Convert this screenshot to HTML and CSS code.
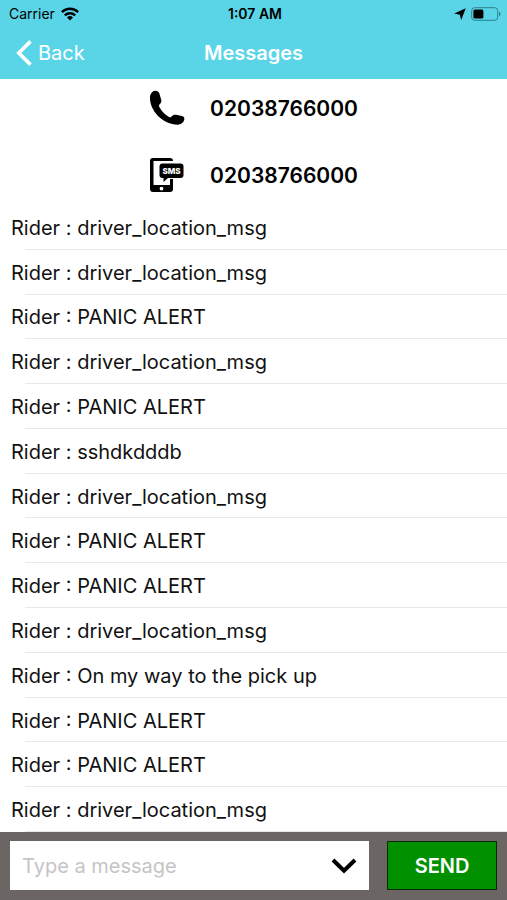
FILE: index.html
```html
<!DOCTYPE html>
<html lang="en">
<head>
<meta charset="utf-8">
<meta name="viewport" content="width=device-width, initial-scale=1">
<title>Messages</title>
<link rel="stylesheet" href="styles.css">
</head>
<body>
<header class="top">
  <div class="status">
    <div class="carrier">
      <span>Carrier</span>
      <svg width="18" height="14" viewBox="0 0 18 14" fill="none" stroke="#000" stroke-width="2.4" aria-hidden="true">
        <path d="M.9 5.1a11.6 11.6 0 0 1 16.2 0"/>
        <path d="M3.8 8.4a7.4 7.4 0 0 1 10.4 0"/>
        <path d="M9 13.4 6 10.5a4.3 4.3 0 0 1 6 0z" fill="#000" stroke="none"/>
      </svg>
    </div>
    <time>1:07 AM</time>
    <div class="power">
      <svg width="12" height="12" viewBox="0 0 12 12" aria-hidden="true"><path d="M11.8.2 7.200 12 5.800 6.800.2 5.500z"/></svg>
      <svg width="30" height="14" viewBox="0 0 30 14" aria-hidden="true">
        <rect x=".7" y=".7" width="26" height="12.6" rx="3" fill="none" stroke="#2f7f8c"/>
        <rect x="2.4" y="2.4" width="10" height="9.2" rx="1.5"/>
        <path d="M28 4.8c2 .6 2 3.8 0 4.4z" fill="#2f7f8c"/>
      </svg>
    </div>
  </div>
  <nav class="bar">
    <a class="back" href="#">
      <svg width="16" height="26" viewBox="0 0 16 26" fill="none" stroke="#fff" stroke-width="3.6" aria-hidden="true"><path d="M14.5 1.4 2.8 13l11.7 11.6"/></svg>
      <span>Back</span>
    </a>
    <h1>Messages</h1>
  </nav>
</header>
<main class="content">
  <section class="contacts">
    <a class="contact" href="tel:02038766000">
      <svg width="36" height="36" viewBox="0 0 36 36" aria-hidden="true"><path d="M1 6.500C1.300 3.500 3.200 1 6 .7c2.200-.2 3.700.7 4.300 2.600l1.900 6.500c.5 1.700.1 3-1.200 4.100-1.200 1-1.300 1.900-.6 3.200 2.200 4.100 5.200 7.300 9.200 9.700 1.300.8 2.200.7 3.200-.5 1.100-1.400 2.400-1.900 4.100-1.500l6 1.200c2 .4 2.800 1.700 2.400 3.600-.7 3.300-3.200 5.100-6.500 5.100C14 34.500.2 20.800 1 6.500z"/></svg>
      <span>02038766000</span>
    </a>
    <a class="contact" href="sms:02038766000">
      <svg width="36" height="36" viewBox="0 0 36 36" aria-hidden="true">
        <path fill-rule="evenodd" d="M4 1h17c2 0 3 1.200 3 3H4.500v24H21v-6h3v10c0 2-1 3-3 3H4c-2 0-3-1-3-3V4c0-2 1-3 3-3zm8.500 28.700a1.900 1.900 0 1 0 0 3.800 1.900 1.900 0 0 0 0-3.800z"/>
        <path d="M13.500 6.500h18c2 0 3 1 3 3v8.500c0 2-1 3-3 3H19l-4.500 4v-4h-1c-2 0-3-1-3-3V9.500c0-2 1-3 3-3z"/>
        <text class="sms" x="22.500" y="16.500" text-anchor="middle">SMS</text>
      </svg>
      <span>02038766000</span>
    </a>
  </section>
  <ul class="messages">
    <li>Rider : driver_location_msg</li>
    <li>Rider : driver_location_msg</li>
    <li>Rider : PANIC ALERT</li>
    <li>Rider : driver_location_msg</li>
    <li>Rider : PANIC ALERT</li>
    <li>Rider : sshdkdddb</li>
    <li>Rider : driver_location_msg</li>
    <li>Rider : PANIC ALERT</li>
    <li>Rider : PANIC ALERT</li>
    <li>Rider : driver_location_msg</li>
    <li>Rider : On my way to the pick up</li>
    <li>Rider : PANIC ALERT</li>
    <li>Rider : PANIC ALERT</li>
    <li>Rider : driver_location_msg</li>
  </ul>
</main>
<form class="composer">
  <div class="field">
    <input type="text" placeholder="Type a message" aria-label="Type a message">
    <button class="presets" type="button" aria-label="Preset messages">
      <svg width="26" height="16" viewBox="0 0 26 16" fill="none" stroke="#000" stroke-width="4" aria-hidden="true"><path d="M2 2l11 10.800L24 2"/></svg>
    </button>
  </div>
  <button class="send" type="button">SEND</button>
</form>
</body>
</html>
```
FILE: styles.css
```css
* { box-sizing: border-box; }

body {
  margin: 0;
  min-height: 100vh;
  display: flex;
  flex-direction: column;
  background: #fff;
  color: #111;
  font-family: Inter, "Liberation Sans", sans-serif;
  font-size: 20px;
}

a { color: inherit; text-decoration: none; }
svg { display: block; flex: none; }

.top { background: #5ad5e7; }

.status {
  display: grid;
  grid-template-columns: 1fr auto 1fr;
  align-items: center;
  height: 27px;
  padding: 0 6px 0 9px;
  color: #000;
  font-size: 14px;
}
.status time { font-weight: 600; }
.carrier { display: flex; align-items: center; gap: 6px; }
.power { display: flex; align-items: center; justify-content: flex-end; gap: 5px; }

.bar {
  display: grid;
  grid-template-columns: 1fr auto 1fr;
  align-items: center;
  height: 52px;
  padding: 0 16px;
  color: #fff;
}
.back { display: flex; align-items: center; gap: 6px; }
.bar h1 { margin: 0; font-size: 20px; font-weight: 600; }

.content { flex: 1; display: flex; flex-direction: column; }

.contacts {
  display: flex;
  flex-direction: column;
  align-items: center;
  gap: 31px;
  padding: 11px 0 12px;
}
.contact {
  display: flex;
  align-items: center;
  gap: 25px;
  color: #000;
  font-size: 21px;
  font-weight: 600;
}
.sms { fill: #fff; font-size: 8px; font-weight: 800; }

.messages {
  flex: 1;
  display: grid;
  grid-auto-rows: 1fr;
  margin: 0;
  padding: 0;
  list-style: none;
}
.messages li {
  display: flex;
  align-items: center;
  padding: 1px 11px 0;
  background: linear-gradient(#e9e9e9, #e9e9e9) 25px 100% / 100% 1px no-repeat;
}

.composer {
  display: flex;
  gap: 18px;
  padding: 9px 10px 10px;
  background: #6b6664;
}
.field { flex: 1; display: flex; min-width: 0; height: 49px; background: #fff; }
.field input {
  flex: 1;
  min-width: 0;
  padding: 0 12px;
  border: 0;
  background: none;
  font: inherit;
}
.field input::placeholder { color: #c4c4c6; }
.presets { padding: 0 12px; border: 0; background: none; }
.send {
  width: 110px;
  border: 1px solid #052c05;
  background: #009000;
  color: #fff;
  font: inherit;
  font-weight: 600;
}
```
